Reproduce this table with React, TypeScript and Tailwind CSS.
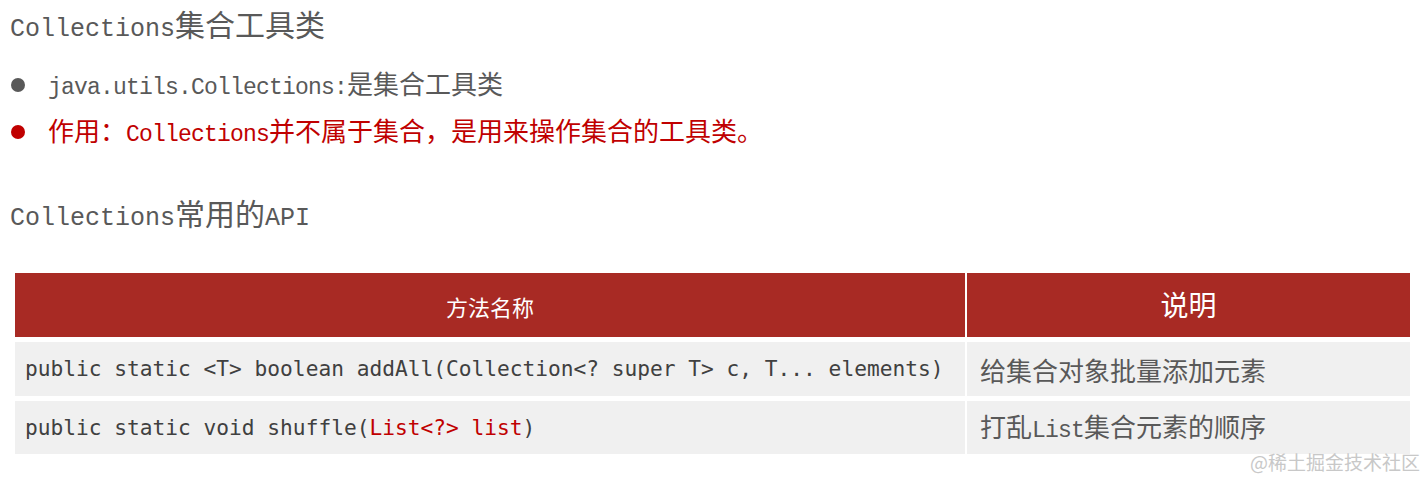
const cjk = '"Noto Sans CJK SC", sans-serif';

function Latin({ children, size = "23px" }: { children: React.ReactNode; size?: string }) {
  return (
    <span
      className="tracking-[-0.8px]"
      style={{ fontFamily: '"Liberation Mono", monospace', fontSize: size }}
    >
      {children}
    </span>
  );
}

export default function App() {
  return (
    <div className="relative w-[1427px] h-[477px] bg-white overflow-hidden" style={{ fontFamily: cjk }}>
      {/* section 1 */}
      <h1 className="pl-[10px] pt-[5px] h-[41px] leading-[36px] text-[30px] font-normal text-[#595959]">
        <span className="font-['Liberation_Mono',monospace] text-[25px]">Collections</span>集合工具类
      </h1>

      <ul className="mt-[26px] flex flex-col gap-[11px]">
        <li className="flex items-center h-[36px] text-[26px] leading-[36px] text-[#595959]">
          <span className="ml-[11px] w-[14px] h-[14px] rounded-full bg-[#595959]" />
          <span className="ml-[23px]">
            <Latin>java.utils.Collections:</Latin>是集合工具类
          </span>
        </li>
        <li className="flex items-center h-[36px] text-[26px] leading-[36px] text-[#c00000]">
          <span className="ml-[11px] w-[14px] h-[14px] rounded-full bg-[#c00000]" />
          <span className="ml-[23px]">
            作用：<Latin>Collections</Latin>并不属于集合，是用来操作集合的工具类。
          </span>
        </li>
      </ul>

      {/* section 2 */}
      <h2 className="mt-[44px] pl-[10px] h-[36px] leading-[36px] text-[30px] font-normal text-[#595959]">
        <span className="font-['Liberation_Mono',monospace] text-[25px]">Collections</span>常用的
        <span className="font-['Liberation_Mono',monospace] text-[25px]">API</span>
      </h2>

      <div className="mt-[43px] ml-[15px] grid grid-cols-[950px_443px] grid-rows-[64px_54px_53px] gap-x-[2px] gap-y-[5px]">
        <div className="bg-[#a82a24] flex items-center justify-center text-white text-[22px] pt-[2px]">方法名称</div>
        <div className="bg-[#a82a24] flex items-center justify-center text-white text-[28px] pb-[2px]">说明</div>

        <div className="bg-[#f0f0f0] flex items-center pl-[10px] text-[21.2px] text-[#404040] font-['DejaVu_Sans_Mono',monospace] whitespace-pre">
          {"public static <T> boolean addAll(Collection<? super T> c, T... elements)"}
        </div>
        <div className="bg-[#f0f0f0] flex items-center pl-[13px] text-[26px] text-[#595959]">给集合对象批量添加元素</div>

        <div className="bg-[#f0f0f0] flex items-center pl-[10px] text-[21.2px] text-[#404040] font-['DejaVu_Sans_Mono',monospace] whitespace-pre">
          <span>
            {"public static void shuffle("}
            <span className="text-[#c00000]">{"List<?> list"}</span>
            {")"}
          </span>
        </div>
        <div className="bg-[#f0f0f0] flex items-center pl-[13px] text-[26px] text-[#595959]">
          <span>
            打乱<Latin>List</Latin>集合元素的顺序
          </span>
        </div>
      </div>

      {/* watermark */}
      <div className="absolute right-[7px] bottom-[6px] text-[19px] leading-none text-[#c8c8c8]">@稀土掘金技术社区</div>
    </div>
  );
}
